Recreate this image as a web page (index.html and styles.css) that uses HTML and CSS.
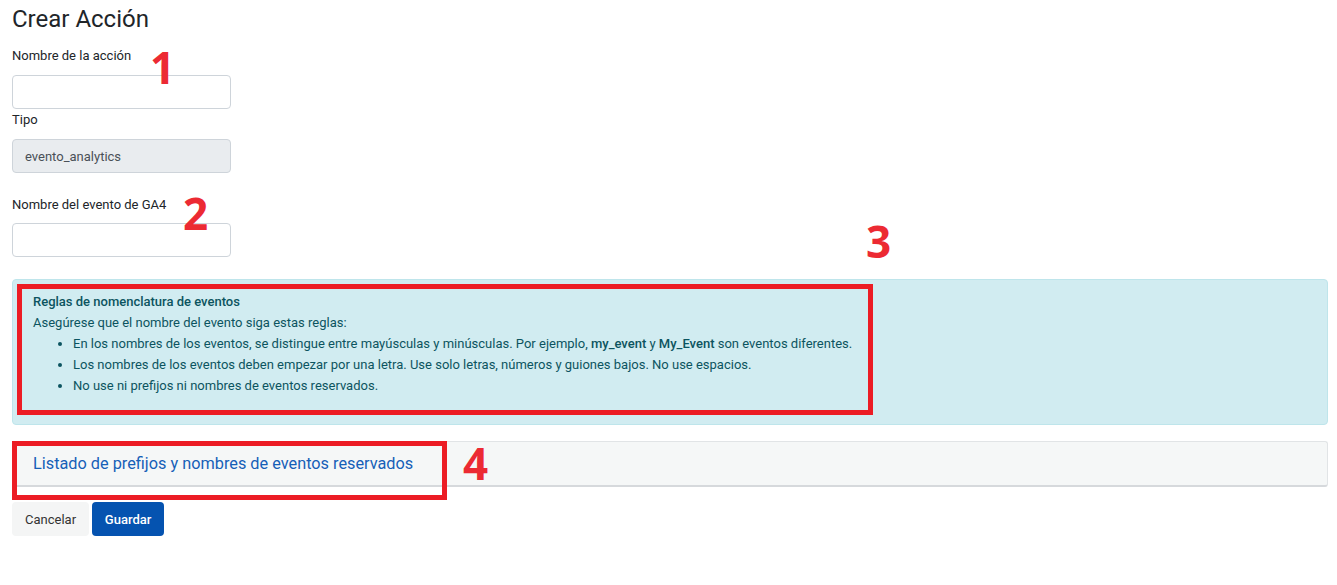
FILE: index.html
```html
<!DOCTYPE html>
<html>
<head>
<meta name="viewport" content="width=device-width, initial-scale=1.0">
<link rel="stylesheet" href="styles.css">
<title>Crear Acción</title>
</head>
<body>
<div class="page">
<h1 class="title">Crear Acción</h1>

<div class="group first">
<label class="lbl" for="nombre">Nombre de la acción</label>
<input class="field" type="text" id="nombre">
</div>

<div class="group second">
<label class="lbl" for="tipo">Tipo</label>
<input class="field" type="text" id="tipo" value="evento_analytics" disabled>
</div>

<div class="group third">
<label class="lbl" for="ga4">Nombre del evento de GA4</label>
<input class="field" type="text" id="ga4">
</div>

<div class="alert">
<div class="alert-title">Reglas de nomenclatura de eventos</div>
<div>Asegúrese que el nombre del evento siga estas reglas:</div>
<ul class="rules">
<li>En los nombres de los eventos, se distingue entre mayúsculas y minúsculas. Por ejemplo, <b>my_event</b> y <b>My_Event</b> son eventos diferentes.</li>
<li>Los nombres de los eventos deben empezar por una letra. Use solo letras, números y guiones bajos. No use espacios.</li>
<li>No use ni prefijos ni nombres de eventos reservados.</li>
</ul>
</div>

<div class="card">
<a class="card-link" href="#">Listado de prefijos y nombres de eventos reservados</a>
</div>

<div class="actions">
<button class="btn cancel">Cancelar</button>
<button class="btn save">Guardar</button>
</div>

<!-- anotaciones -->
<div class="mark box3"></div>
<div class="mark box4"></div>
<span class="num n1">1</span>
<span class="num n2">2</span>
<span class="num n3">3</span>
<span class="num n4">4</span>
</div>
</body>
</html>
```

FILE: styles.css
```css
body{
margin:0;
background:#fff;
font-family:Roboto,"Liberation Sans",sans-serif;
font-size:13px;
color:#212529;
}
.page{
position:relative;
padding:0 9px 0 12px;
}
.title{
font-size:24px;
line-height:29px;
font-weight:400;
margin:5px 0 0 0;
color:#212529;
}
.lbl{
display:block;
line-height:18px;
}
.field{
display:block;
box-sizing:border-box;
width:219px;
height:34px;
border:1px solid #ced4da;
border-radius:4px;
padding:0 12px;
font-family:inherit;
font-size:13px;
color:#495057;
background:#fff;
margin:0;
}
.field:disabled{
background:#e9ecef;
}
.first{
margin-top:13px;
}
.first .lbl{
margin-bottom:10px;
}
.second .lbl{
margin-top:2px;
margin-bottom:10px;
}
.third{
margin-top:23px;
}
.third .lbl{
margin-bottom:9px;
}
.alert{
margin-top:22px;
background:#d1ecf1;
border:1px solid #bee5eb;
border-radius:4px;
color:#0c5460;
padding:11px 20px 12px 20px;
line-height:21px;
}
.alert-title{
font-weight:500;
}
.alert b{
font-weight:500;
}
.rules{
margin:0 0 16px 0;
padding-left:40px;
}
.card{
margin-top:16px;
background:#f5f7f7;
border:1px solid #e1e4e6;
border-bottom:2px solid #d6d9dc;
border-radius:3px;
padding:11px 20px 10px 20px;
line-height:21px;
}
.card-link{
font-size:16.3px;
color:#1560b8;
text-decoration:none;
}
.actions{
display:flex;
gap:3px;
margin-top:15px;
}
.btn{
height:34px;
border:none;
border-radius:4px;
font-family:inherit;
font-size:13px;
padding:0 13px;
}
.cancel{
background:#f4f5f5;
color:#333;
}
.save{
background:#0553b0;
color:#fff;
font-weight:500;
width:72px;
padding:0;
}
.mark{
position:absolute;
border:5px solid #ec1c24;
box-sizing:border-box;
}
.box3{
left:17px;
top:279px;
width:856px;
height:131px;
}
.box4{
left:12px;
top:436px;
width:435px;
height:59px;
}
.num{
position:absolute;
font-family:"Open Sans",sans-serif;
font-weight:700;
font-size:44px;
line-height:44px;
color:#ec2a33;
}
.n1{left:150px;top:40px;}
.n2{left:183px;top:186px;}
.n3{left:866px;top:214px;}
.n4{left:463px;top:436px;}
```
